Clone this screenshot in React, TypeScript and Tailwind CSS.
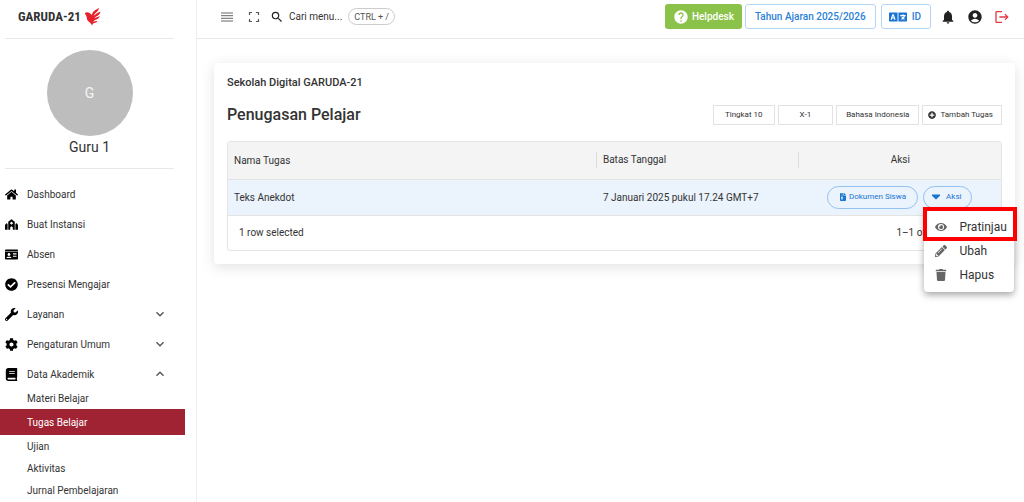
import React, { useState } from "react";
import {
  FaHome,
  FaSynagogue,
  FaIdCard,
  FaCheckCircle,
  FaWrench,
  FaCog,
  FaBook,
  FaEye,
  FaPencilAlt,
  FaTrash,
  FaLanguage,
  FaPlusCircle,
} from "react-icons/fa";
import {
  MdSearch,
  MdNotifications,
  MdAccountCircle,
  MdHelp,
  MdLogout,
  MdExpandMore,
  MdExpandLess,
} from "react-icons/md";
import { FaFileZipper } from "react-icons/fa6";

const menus = [
  { label: "Dashboard", icon: FaHome },
  { label: "Buat Instansi", icon: FaSynagogue },
  { label: "Absen", icon: FaIdCard },
  { label: "Presensi Mengajar", icon: FaCheckCircle },
  { label: "Layanan", icon: FaWrench, group: true },
  { label: "Pengaturan Umum", icon: FaCog, group: true },
  { label: "Data Akademik", icon: FaBook, group: true },
];

const subMenus = ["Materi Belajar", "Tugas Belajar", "Ujian", "Aktivitas", "Jurnal Pembelajaran"];

const rowActions = [
  { label: "Pratinjau", icon: FaEye, highlight: true },
  { label: "Ubah", icon: FaPencilAlt },
  { label: "Hapus", icon: FaTrash },
];

const Logo = () => (
  <a href="#" className="flex items-center gap-1 h-[38px] pb-1 pl-[13px] text-[#333]">
    <span className="font-['Roboto_Condensed','Liberation_Sans_Narrow','Liberation_Sans',sans-serif] text-[13px] font-bold">
      GARUDA-21
    </span>
    <svg viewBox="0 0 32 36" className="w-4 h-[18px]" fill="#e5222b">
      <path d="M0 10c3-2 6-2 9 0l5 4C14 8 20 4 28 0c-1 5-4 8-8 11l-3 5c4-4 8-6 14-9-1 5-4 8-9 10l-4 4c4-2 7-3 12-5-2 5-6 7-10 8l-4 3c3 0 5-1 9-1-3 4-7 4-9 5l-2 4c-1-4-5-6-8-9-3-3-2-8-4-12-2-2-4-2-7-4z" />
    </svg>
  </a>
);

const Sidebar = () => {
  const [openGroup, setOpenGroup] = useState("Data Akademik");

  return (
    <aside className="w-[197px] shrink-0 border-r border-[#eee]">
      <div className="ml-[5px] mr-[22px]">
        <Logo />
        <div className="flex flex-col items-center border-y border-[#e8e8e8] pt-[11px] pb-[11px]">
          <div className="flex items-center justify-center size-[86px] rounded-full bg-[#bdbdbd] text-[#f5f5f5] text-sm">
            G
          </div>
          <p className="text-sm leading-5 mt-px">Guru 1</p>
        </div>
      </div>

      <nav className="pt-[10px]">
        {menus.map(({ label, icon: Icon, group }) => (
          <button
            key={label}
            type="button"
            onClick={() => group && setOpenGroup(openGroup === label ? "" : label)}
            className="flex items-center w-full h-[30px] pl-[5px] pr-7 text-[10px] text-left"
          >
            <Icon className="size-[13px] mr-[9px] text-black" />
            <span className="flex-1">{label}</span>
            {group &&
              (openGroup === label ? (
                <MdExpandLess className="size-4 text-[#555]" />
              ) : (
                <MdExpandMore className="size-4 text-[#555]" />
              ))}
          </button>
        ))}
        {openGroup === "Data Akademik" && (
          <ul className="-mt-0.5 text-[10px]">
            {subMenus.map((item) => (
              <li key={item} className={item === "Tugas Belajar" ? "mr-[11px] bg-[#a02334] text-white" : ""}>
                <a
                  href="#"
                  className={`flex items-center pl-[27px] ${item === "Tugas Belajar" ? "h-[26px]" : "h-[22px]"}`}
                >
                  {item}
                </a>
              </li>
            ))}
          </ul>
        )}
      </nav>
    </aside>
  );
};

const Topbar = () => (
  <header className="flex items-center h-[39px] pt-[3px] pb-2 pl-[23px] pr-[14px] border-b border-[#e8e8e8]">
    <button type="button" aria-label="Menu" className="text-[#666]">
      <svg viewBox="0 0 14 10" className="w-3.5 h-2.5" stroke="currentColor">
        <path d="M1 1h12M1 3.7h12M1 6.3h12M1 9h12" />
      </svg>
    </button>
    <button type="button" aria-label="Layar penuh" className="ml-[14px] text-[#555]">
      <svg viewBox="0 0 12 12" className="size-3" fill="none" stroke="currentColor" strokeWidth="1.2">
        <path d="M1.5 4V1.5H4M8 1.5h2.5V4M10.5 8v2.5H8M4 10.5H1.5V8" />
      </svg>
    </button>
    <button type="button" className="flex items-center ml-[10px] text-[10px]">
      <MdSearch className="size-3.5 mr-[5px] text-[#222]" />
      Cari menu...
      <kbd className="ml-1.5 px-[5px] h-[17px] leading-4 rounded-full border border-[#ccc] font-['Roboto',sans-serif] text-[9px] text-[#555]">
        CTRL + /
      </kbd>
    </button>

    <div className="flex items-center ml-auto text-[10px] font-medium text-[#2b7fd6]">
      <button type="button" className="flex items-center h-[25px] px-2 rounded-[3px] bg-[#8bc34a] text-white">
        <MdHelp className="size-4 mr-[3px]" />
        Helpdesk
      </button>
      <button type="button" className="h-[25px] ml-[3px] px-[9px] rounded-[3px] border border-[#b5d5f5]">
        Tahun Ajaran 2025/2026
      </button>
      <button type="button" className="flex items-center h-[25px] ml-[5px] pl-[7px] pr-[9px] rounded-[3px] border border-[#b5d5f5]">
        <FaLanguage className="size-[18px] mr-[5px] text-[#1976d2]" />
        ID
      </button>
      <button type="button" aria-label="Notifikasi" className="ml-[9px] text-[#222]">
        <MdNotifications className="size-4" />
      </button>
      <button type="button" aria-label="Akun" className="ml-[11px] text-[#222]">
        <MdAccountCircle className="size-4" />
      </button>
      <button type="button" aria-label="Keluar" className="ml-[11px] text-[#e53946]">
        <MdLogout className="size-4" />
      </button>
    </div>
  </header>
);

const ActionMenu = () => (
  <div className="absolute top-full right-[-42px] z-10 w-[90px] pt-[6px] pb-[5px] rounded bg-white shadow-[0_3px_7px_rgba(0,0,0,0.35)] text-xs text-[#333]">
    {rowActions.map(({ label, icon: Icon, highlight }) => (
      <button key={label} type="button" className="flex items-center w-full h-6 pl-[11px]">
        <Icon className="size-3 mr-3 text-[#666]" />
        {label}
        {highlight && (
          <span className="absolute -top-0.5 -left-px -right-[3px] h-[34px] border-4 border-[#f00]" />
        )}
      </button>
    ))}
  </div>
);

const App = () => {
  const [menuOpen, setMenuOpen] = useState(true);

  return (
    <div className="flex h-screen overflow-hidden bg-white font-['Roboto',sans-serif] text-[#333]">
      <Sidebar />
      <div className="flex-1 min-w-0">
        <Topbar />
        <main className="pt-6 pl-[17px] pr-[9px]">
          <section className="rounded px-[13px] pt-3 pb-[13px] shadow-[0_3px_14px_rgba(0,0,0,0.12)]">
            <h2 className="text-[11px] leading-4 font-medium">Sekolah Digital GARUDA-21</h2>
            <div className="flex items-center justify-between mt-3">
              <h1 className="text-base leading-6 font-medium">Penugasan Pelajar</h1>
              <div className="flex gap-[3px] text-[8px]">
                <button type="button" className="h-5 px-[11px] border border-[#e2e2e2]">Tingkat 10</button>
                <button type="button" className="h-5 px-[21px] border border-[#e2e2e2]">X-1</button>
                <button type="button" className="h-5 px-[9px] border border-[#e2e2e2]">Bahasa Indonesia</button>
                <button type="button" className="flex items-center h-5 pl-[5px] pr-2 border border-[#e2e2e2]">
                  <FaPlusCircle className="size-2 mr-1" />
                  Tambah Tugas
                </button>
              </div>
            </div>

            <div className="mt-[14px] rounded-[3px] border border-[#e4e4e4] text-[10px]">
              <table className="w-full table-fixed text-left">
                <thead>
                  <tr className="h-[37px] bg-[#f4f4f4] border-b border-[#e4e4e4]">
                    <th className="w-[47.6%] pl-1.5 font-normal">Nama Tugas</th>
                    <th className="w-[26.2%] p-0 font-normal">
                      <div className="pl-1.5 leading-4 border-l border-[#ddd]">Batas Tanggal</div>
                    </th>
                    <th className="p-0 font-normal text-center">
                      <div className="leading-4 border-l border-[#ddd]">Aksi</div>
                    </th>
                  </tr>
                </thead>
                <tbody>
                  <tr className="h-9 bg-[#ebf3fc] border-b border-[#e4e4e4]">
                    <td className="pl-1.5">Teks Anekdot</td>
                    <td className="pl-[7px]">7 Januari 2025 pukul 17.24 GMT+7</td>
                    <td className="p-0">
                      <div className="flex justify-center gap-[5px] text-[8px] text-[#1976d2]">
                        <button type="button" className="flex items-center h-[23px] px-[11px] rounded-full border border-[#93c2f0]">
                          <FaFileZipper className="size-2 mr-0.5" />
                          Dokumen Siswa
                        </button>
                        <div className="relative">
                          <button
                            type="button"
                            onClick={() => setMenuOpen(!menuOpen)}
                            className="flex items-center h-[23px] pl-2 pr-[10px] rounded-full border border-[#93c2f0]"
                          >
                            <svg viewBox="0 0 10 6" className="w-2 h-1.5 mr-1.5" fill="currentColor">
                              <path d="M0 0h10v1.5L5 6 0 1.5z" />
                            </svg>
                            Aksi
                          </button>
                          {menuOpen && <ActionMenu />}
                        </div>
                      </div>
                    </td>
                  </tr>
                </tbody>
              </table>
              <div className="flex items-center justify-between h-[34px] pl-[11px] pr-[67px]">
                <span>1 row selected</span>
                <span>1–1 of 1</span>
              </div>
            </div>
          </section>
        </main>
      </div>
    </div>
  );
};

export default App;
